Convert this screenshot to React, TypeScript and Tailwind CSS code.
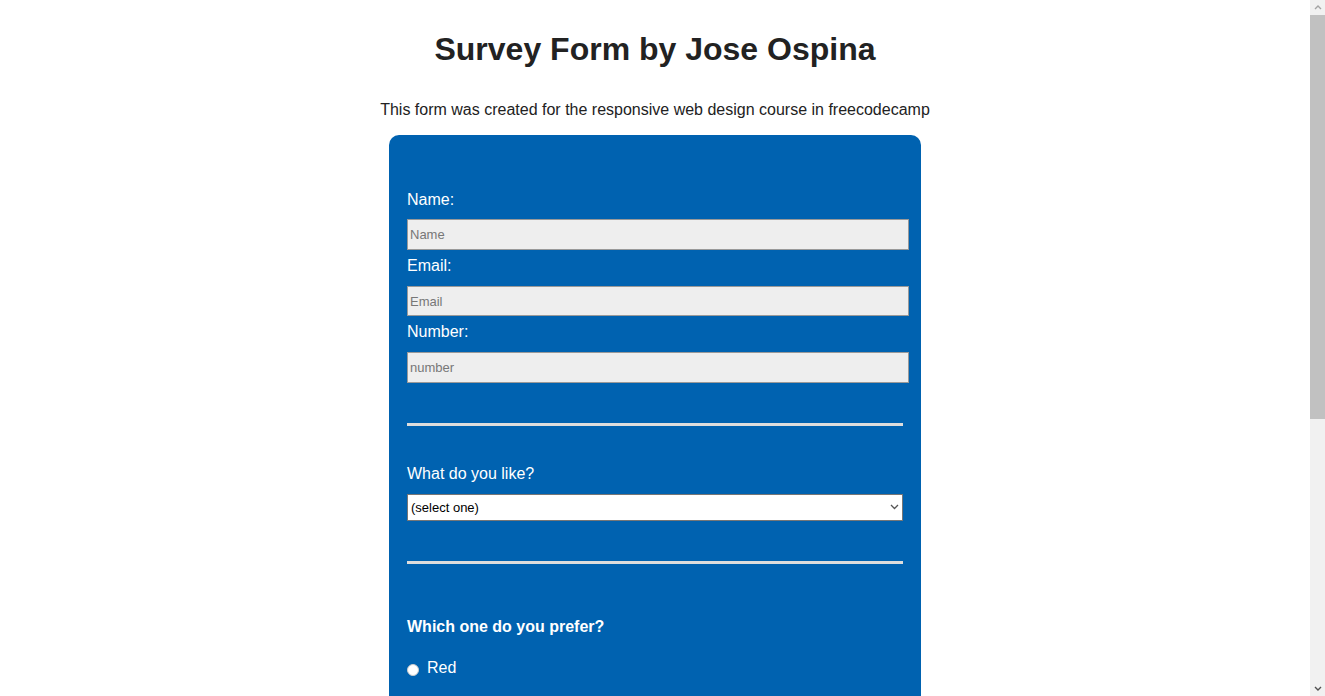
import React from 'react';

export default function App() {
  return (
    <div className="flex h-[696px] overflow-hidden bg-white text-[#222] font-['Liberation_Sans',Arial,sans-serif]">
      <main className="flex-1 overflow-hidden">
        <h1 className="pt-[31px] text-center text-[32px] font-bold leading-[37px]">Survey Form by Jose Ospina</h1>
        <p className="mt-[33px] text-center text-base leading-[18px]">
          This form was created for the responsive web design course in freecodecamp
        </p>

        <form className="mx-auto mt-[16px] w-[532px] rounded-[10px] bg-[#0062b0] px-[18px] pb-[60px] pt-[56px] text-white">
          <label className="block text-base leading-[18px]">Name:</label>
          <input
            type="text"
            placeholder="Name"
            className="mt-[10px] block h-[31px] w-[502px] border border-[#999] bg-[#eee] px-[2px] text-[13px] text-black placeholder:text-[#777] outline-none"
          />
          <label className="mt-[7px] block text-base leading-[18px]">Email:</label>
          <input
            type="email"
            placeholder="Email"
            className="mt-[11px] block h-[30px] w-[502px] border border-[#999] bg-[#eee] px-[2px] text-[13px] text-black placeholder:text-[#777] outline-none"
          />
          <label className="mt-[7px] block text-base leading-[18px]">Number:</label>
          <input
            type="number"
            placeholder="number"
            className="mt-[11px] block h-[31px] w-[502px] border border-[#999] bg-[#eee] px-[2px] text-[13px] text-black placeholder:text-[#777] outline-none"
          />

          <div className="mt-[40px] h-[3px] w-[496px] bg-[#ddd]" />

          <label className="mt-[39px] block text-base leading-[18px]">What do you like?</label>
          <div className="relative mt-[11px] h-[27px] w-[496px]">
            <select className="h-full w-full appearance-none border border-[#767676] bg-white pl-[3px] text-[13px] text-black outline-none">
              <option>(select one)</option>
              <option>Coding</option>
              <option>Design</option>
              <option>Music</option>
            </select>
            <svg
              className="pointer-events-none absolute right-[4px] top-[10px]"
              width="9"
              height="6"
              viewBox="0 0 9 6"
              fill="none"
              stroke="#555"
              strokeWidth="1.3"
            >
              <path d="M1 1l3.5 3.5L8 1" />
            </svg>
          </div>

          <div className="mt-[40px] h-[3px] w-[496px] bg-[#ddd]" />

          <p className="mt-[54px] text-base font-bold leading-[18px]">Which one do you prefer?</p>

          <label className="mt-[23px] flex items-center text-base leading-[18px]">
            <span className="mt-[4px] mr-[8px] h-[12px] w-[12px] rounded-full border border-[#ccc] bg-white" />
            Red
          </label>
        </form>
      </main>

      {/* page scrollbar */}
      <div className="flex h-full w-[15px] flex-col bg-[#f1f1f1]">
        <div className="flex h-[15px] items-center justify-center">
          <svg width="8" height="5" viewBox="0 0 8 5" fill="none" stroke="#a3a3a3" strokeWidth="1.4">
            <path d="M1 4l3-3 3 3" />
          </svg>
        </div>
        <div className="mx-0 h-[404px] bg-[#c1c1c1]" />
        <div className="flex-1" />
        <div className="flex h-[15px] items-center justify-center">
          <svg width="8" height="5" viewBox="0 0 8 5" fill="none" stroke="#505050" strokeWidth="1.4">
            <path d="M1 1l3 3 3-3" />
          </svg>
        </div>
      </div>
    </div>
  );
}
